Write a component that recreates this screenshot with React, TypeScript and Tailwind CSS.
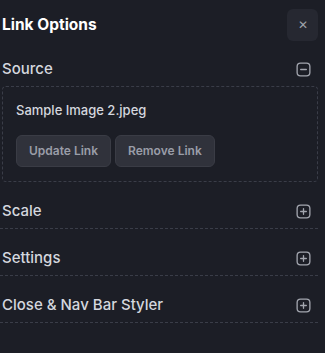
import React, { FC } from 'react';

type Props = { label: string; open?: boolean };

const ToggleIcon: FC<{ open?: boolean }> = ({ open }) => (
    <svg className="h-[15px] w-[15px]" viewBox="0 0 16 16" fill="none" stroke="#a3a6af" strokeWidth="1.4" strokeLinecap="round">
        <rect x="1.2" y="1.2" width="13.6" height="13.6" rx="3.6" />
        <path d="M5 8h6" />
        {!open && <path d="M8 5v6" />}
    </svg>
);

const Trigger: FC<Props> = ({ label, open }) => (
    <div className={`mt-[13px] flex h-[34px] items-center justify-between pl-[2px] pr-[7px] ${open ? '' : 'border-b border-dashed border-[#3a3d48]'}`}>
        <span className="text-[15px] font-medium text-[#d4d7de]">{label}</span>
        <ToggleIcon open={open} />
    </div>
);

const App: FC = () => {
    return (
        <div className="h-[353px] w-[325px] bg-[#1c1e26] pr-[7px] pt-[9px]" style={{ fontFamily: 'Inter, "Noto Sans", sans-serif' }}>
            <div className="flex items-center justify-between pl-[2px]">
                <h1 className="text-[15.5px] font-bold text-white">Link Options</h1>
                <button className="flex h-[32px] w-[31px] items-center justify-center rounded-md bg-[#262831] text-[12px] text-[#9ea1aa]">
                    ✕
                </button>
            </div>

            <div className="-mt-[2px]">
                <Trigger label="Source" open />
            </div>
            <div className="ml-[2px] rounded-sm border border-dashed border-[#3a3d48] px-[13px] pb-[14px] pt-[14px]">
                <p className="text-[13px] font-medium text-[#d4d7de]">Sample Image 2.jpeg</p>
                <div className="mt-[14px] flex gap-1">
                    <button className="h-[32px] rounded-md border border-[#3a3c45] bg-[#30323b] px-[12px] text-[12px] font-semibold text-[#9a9da8]">Update Link</button>
                    <button className="h-[32px] rounded-md border border-[#3a3c45] bg-[#30323b] px-[12px] text-[12px] font-semibold text-[#9a9da8]">Remove Link</button>
                </div>
            </div>

            <Trigger label="Scale" />
            <Trigger label="Settings" />
            <Trigger label="Close & Nav Bar Styler" />
        </div>
    );
};

export default App;
